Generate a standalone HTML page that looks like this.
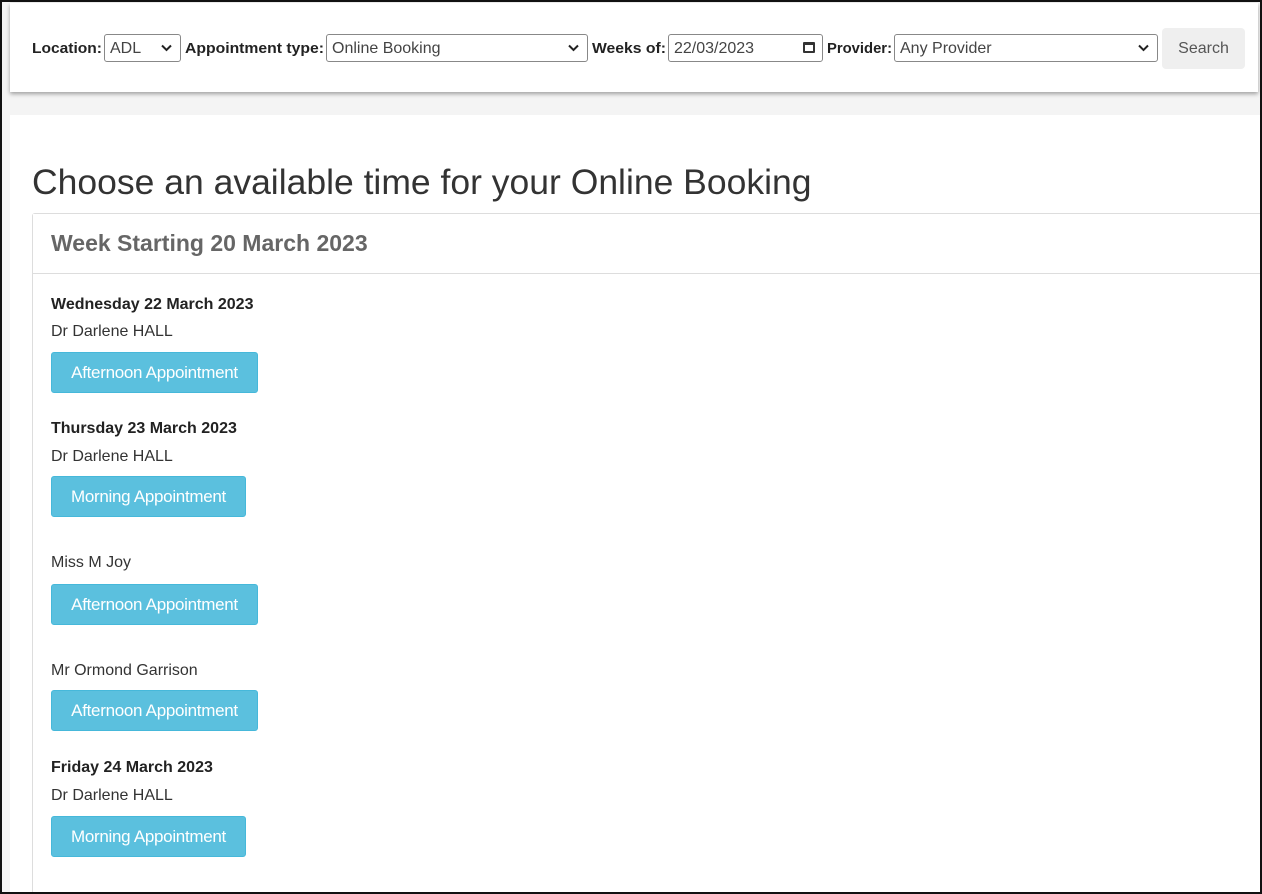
<!DOCTYPE html>
<html><head><style>
*{box-sizing:border-box;margin:0;padding:0}
html,body{width:1262px;height:894px;overflow:hidden}
body{background:#f4f4f4;font-family:"Liberation Sans",Arial,sans-serif;position:relative;color:#333}
.frame{position:absolute;left:0;top:0;width:1262px;height:894px;border:2px solid #111;z-index:10;pointer-events:none}
.top{position:absolute;left:10px;top:3px;width:1248px;height:89px;background:#fff;box-shadow:0 2px 4px rgba(0,0,0,.35)}
svg.l{position:absolute;top:36px;height:24px;overflow:visible}
svg.l text{font-family:"Liberation Sans",Arial,sans-serif;font-size:15px;font-weight:bold;fill:#222}
.sel{position:absolute;top:34px;height:28px;border:1px solid #888;border-radius:3px;background:#fff;font-size:16px;color:#444;padding:5px 0 0 5px}
.sel svg.ch{position:absolute;right:8px;top:9px}
.search{position:absolute;left:1162px;top:28px;width:83px;height:41px;background:#efefef;border-radius:4px;font-size:16px;color:#555;text-align:center;line-height:41px}
.main{position:absolute;left:10px;top:115px;width:1252px;height:780px;background:#fff}
h1{position:absolute;left:32px;top:162px;font-size:35.5px;font-weight:normal;color:#333}
.panel{position:absolute;left:32px;top:213px;width:1240px;height:700px;border:1px solid #ddd;border-radius:3px}
.ph{height:60px;border-bottom:1px solid #ddd;background:#fff;font-size:23px;font-weight:bold;color:#666;padding:16px 0 0 18px}
.t{position:absolute;left:51px;font-size:16px;color:#333}
.b{font-weight:bold;color:#222}
.btn{position:absolute;left:51px;height:41px;background:#5bc0de;border:1px solid #46b8da;border-radius:3px;color:#fff;font-size:17px;line-height:39px;text-align:center;letter-spacing:-.3px}
</style></head><body>
<div class="top"></div>
<svg class="l" style="left:32px;width:70px"><text x="0" y="17" textLength="70" lengthAdjust="spacingAndGlyphs">Location:</text></svg>
<div class="sel" style="left:104px;width:77px">ADL<svg class="ch" width="11" height="8"><polyline points="1,1.5 5.5,6 10,1.5" fill="none" stroke="#222" stroke-width="2"/></svg></div>
<svg class="l" style="left:185px;width:139px"><text x="0" y="17" textLength="139" lengthAdjust="spacingAndGlyphs">Appointment type:</text></svg>
<div class="sel" style="left:326px;width:262px">Online Booking<svg class="ch" width="11" height="8"><polyline points="1,1.5 5.5,6 10,1.5" fill="none" stroke="#222" stroke-width="2"/></svg></div>
<svg class="l" style="left:592px;width:74px"><text x="0" y="17" textLength="74" lengthAdjust="spacingAndGlyphs">Weeks of:</text></svg>
<div class="sel" style="left:668px;width:155px">22/03/2023<span style="position:absolute;right:7px;top:7px;width:12px;height:11px;border:2px solid #333;border-top-width:3px;border-radius:1px"></span></div>
<svg class="l" style="left:827px;width:65px"><text x="0" y="17" textLength="65" lengthAdjust="spacingAndGlyphs">Provider:</text></svg>
<div class="sel" style="left:894px;width:264px">Any Provider<svg class="ch" width="11" height="8"><polyline points="1,1.5 5.5,6 10,1.5" fill="none" stroke="#222" stroke-width="2"/></svg></div>
<div class="search">Search</div>
<div class="main"></div>
<h1>Choose an available time for your Online Booking</h1>
<div class="panel"><div class="ph">Week Starting 20 March 2023</div></div>
<div class="t b" style="top:296px">Wednesday 22 March 2023</div>
<div class="t" style="top:323px">Dr Darlene HALL</div>
<div class="btn" style="top:352px;width:207px">Afternoon Appointment</div>
<div class="t b" style="top:420px">Thursday 23 March 2023</div>
<div class="t" style="top:448px">Dr Darlene HALL</div>
<div class="btn" style="top:476px;width:195px">Morning Appointment</div>
<div class="t" style="top:554px">Miss M Joy</div>
<div class="btn" style="top:584px;width:207px">Afternoon Appointment</div>
<div class="t" style="top:662px">Mr Ormond Garrison</div>
<div class="btn" style="top:690px;width:207px">Afternoon Appointment</div>
<div class="t b" style="top:759px">Friday 24 March 2023</div>
<div class="t" style="top:787px">Dr Darlene HALL</div>
<div class="btn" style="top:816px;width:195px">Morning Appointment</div>
<div class="frame"></div>
</body></html>
